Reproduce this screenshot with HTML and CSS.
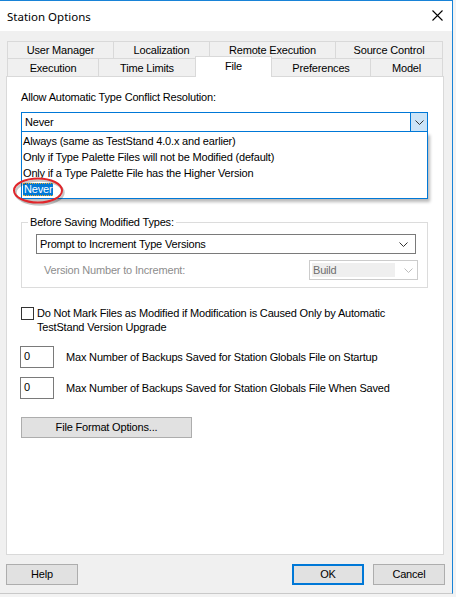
FILE: index.html
```html
<!DOCTYPE html>
<html>
<head>
<meta charset="utf-8">
<link rel="stylesheet" href="styles.css">
</head>
<body>
<div class="window">
  <div class="titlebar">
    <span class="title">Station Options</span>
    <svg class="close" width="11" height="11" viewBox="0 0 11 11"><path d="M0.5 0.5 L10.5 10.5 M10.5 0.5 L0.5 10.5" stroke="#000" stroke-width="1.1" fill="none"/></svg>
  </div>
  <div class="client">
    <div class="tabs">
      <div class="tabrow row1">
        <div class="tab w106">User Manager</div>
        <div class="tab w96">Localization</div>
        <div class="tab w126">Remote Execution</div>
        <div class="tab w108 last">Source Control</div>
      </div>
      <div class="tabrow row2">
        <div class="tab w91">Execution</div>
        <div class="tab w97">Time Limits</div>
        <div class="tab sel">File</div>
        <div class="tab w98">Preferences</div>
        <div class="tab w73 last">Model</div>
      </div>
    </div>
    <div class="panel">
      <div class="label-top">Allow Automatic Type Conflict Resolution:</div>
      <div class="combo-wrap">
        <div class="combo open">
          <span class="combo-text">Never</span>
          <span class="combo-btn"><svg width="9" height="5" viewBox="0 0 9 5"><path d="M0.5 0.5 L4.5 4.5 L8.5 0.5" stroke="#333" fill="none"/></svg></span>
        </div>
        <div class="dropdown">
          <div class="item">Always (same as TestStand 4.0.x and earlier)</div>
          <div class="item">Only if Type Palette Files will not be Modified (default)</div>
          <div class="item">Only if a Type Palette File has the Higher Version</div>
          <div class="item"><span class="hl">Never</span></div>
        </div>
        <svg class="circle" width="56" height="32" viewBox="0 0 56 32"><ellipse cx="27.5" cy="16.5" rx="24" ry="12" fill="none" stroke="rgba(0,0,0,0.22)" stroke-width="2.5"/><ellipse cx="26" cy="14.5" rx="24" ry="12" fill="none" stroke="#e0262b" stroke-width="2"/></svg>
      </div>

      <div class="group">
        <div class="legend">Before Saving Modified Types:</div>
        <div class="combo plain">
          <span class="combo-text">Prompt to Increment Type Versions</span>
          <svg class="chev" width="9" height="5" viewBox="0 0 9 5"><path d="M0.5 0.5 L4.5 4.5 L8.5 0.5" stroke="#333" fill="none"/></svg>
        </div>
        <div class="vrow">
          <span class="disabled-label">Version Number to Increment:</span>
          <div class="combo disabled">
            <span class="dis-field">Build</span>
            <svg class="chev" width="9" height="5" viewBox="0 0 9 5"><path d="M0.5 0.5 L4.5 4.5 L8.5 0.5" stroke="#bdbdbd" fill="none"/></svg>
          </div>
        </div>
      </div>

      <div class="check-row">
        <span class="checkbox"></span>
        <span class="check-text">Do Not Mark Files as Modified if Modification is Caused Only by Automatic<br>TestStand Version Upgrade</span>
      </div>

      <div class="num-row first">
        <span class="numbox">0</span>
        <span class="num-label">Max Number of Backups Saved for Station Globals File on Startup</span>
      </div>
      <div class="num-row">
        <span class="numbox">0</span>
        <span class="num-label">Max Number of Backups Saved for Station Globals File When Saved</span>
      </div>

      <div class="btn wide">File Format Options...</div>
    </div>
    <div class="footer">
      <div class="btn fbtn">Help</div>
      <div class="spacer"></div>
      <div class="btn fbtn default">OK</div>
      <div class="btn fbtn">Cancel</div>
    </div>
  </div>
</div>
</body>
</html>
```

FILE: styles.css
```css
* { box-sizing: border-box; }
html, body { margin: 0; padding: 0; }
body {
  width: 456px;
  height: 597px;
  background: #f3f3f3;
  font-family: "Liberation Sans", Arial, sans-serif;
  font-size: 11px;
  letter-spacing: -0.18px;
  color: #000;
  overflow: hidden;
}
.window {
  width: 453px;
  height: 594px;
  border-top: 1px solid #1883d7;
  border-right: 1px solid #1883d7;
  border-bottom: 1px solid #c9c9c9;
  background: #f0f0f0;
  display: flex;
  flex-direction: column;
}
.titlebar {
  height: 30px;
  background: #fff;
  display: flex;
  align-items: center;
  padding: 0 0 0 7px;
}
.title {
  font-family: "Noto Sans", "Liberation Sans", sans-serif;
  font-size: 11.5px;
  letter-spacing: 0;
  color: #000;
  flex: 1;
  padding-top: 1px;
}
.close { margin-right: 9px; margin-top: -1px; }
.client {
  flex: 1;
  padding-top: 10px;
  display: flex;
  flex-direction: column;
}
.tabs { margin-left: 7px; width: 436px; }
.tabrow { display: flex; }
.row1 { height: 17px; }
.row2 { height: 18px; }
.tab {
  border-top: 1px solid #d9d9d9;
  border-left: 1px solid #d9d9d9;
  background: #f0f0f0;
  text-align: center;
  line-height: 16px;
  white-space: nowrap;
}
.tab.last { border-right: 1px solid #d9d9d9; }
.row2 .tab { line-height: 18px; }
.w106 { width: 106px; }
.w96 { width: 96px; }
.w126 { width: 126px; }
.w108 { width: 108px; }
.w91 { width: 91px; }
.w97 { width: 97px; }
.w98 { width: 98px; }
.w73 { width: 73px; }
.tab.sel {
  width: 77px;
  height: 21px;
  margin-top: -2px;
  background: #fff;
  border-right: 1px solid #d9d9d9;
  line-height: 18px;
  z-index: 2;
}
.tab.sel + .tab { border-left: none; }
.panel {
  margin-left: 6px;
  width: 438px;
  height: 479px;
  background: #fff;
  border: 1px solid #d9d9d9;
  padding: 0 14px;
}
.label-top { margin-top: 14px; line-height: 13px; }
.combo-wrap { position: relative; margin-top: 8px; width: 407px; }
.combo {
  height: 20px;
  display: flex;
  align-items: center;
  background: #fff;
}
.combo.open { border: 1px solid #0078d7; }
.combo-text { flex: 1; padding-left: 3px; white-space: nowrap; }
.combo-btn {
  width: 17px;
  height: 18px;
  background: #cce4f7;
  border-left: 1px solid #0078d7;
  display: flex;
  align-items: center;
  justify-content: center;
}
.dropdown {
  position: absolute;
  left: 0;
  top: 20px;
  width: 407px;
  height: 67px;
  background: #fff;
  border: 1px solid #0078d7;
  border-top: none;
  box-shadow: 2px 3px 3px rgba(0,0,0,0.28);
  padding-top: 1px;
  z-index: 3;
}
.item { height: 16px; line-height: 16px; padding-left: 1px; white-space: nowrap; }
.hl {
  display: inline-block;
  background: #0078d7;
  color: #fff;
  line-height: 11px;
  padding: 0 1px;
  border-top: 1px dotted #e8b030;
  border-bottom: 1px dotted #e8b030;
  vertical-align: middle;
  margin-top: -2px;
}
.circle { position: absolute; left: -9px; top: 64px; z-index: 4; }
.group {
  margin-top: 90px;
  width: 407px;
  height: 66px;
  border: 1px solid #dcdcdc;
  padding: 0 9px 0 14px;
}
.legend {
  width: fit-content;
  margin-top: -7px;
  margin-left: -8px;
  padding: 0 2px;
  line-height: 13px;
  background: #fff;
}
.combo.plain {
  margin-top: 5px;
  width: 380px;
  border: 1px solid #7a7a7a;
}
.chev { margin-right: 7px; }
.vrow {
  margin-top: 6px;
  display: flex;
  justify-content: space-between;
  align-items: center;
}
.disabled-label { color: #8d8d8d; padding-left: 8px; }
.combo.disabled {
  width: 109px;
  border: 1px solid #cccccc;
  padding-left: 2px;
}
.dis-field {
  flex: 1;
  height: 14px;
  line-height: 14px;
  background: #efefef;
  color: #6d6d6d;
  padding-left: 1px;
  margin-right: 9px;
}
.combo.disabled .chev { margin-right: 4px; }
.check-row {
  margin-top: 18px;
  display: flex;
  align-items: flex-start;
}
.checkbox {
  width: 13px;
  height: 13px;
  border: 1px solid #333;
  margin-top: 1px;
  flex: none;
}
.check-text { margin-left: 3px; line-height: 14px; }
.num-row {
  display: flex;
  align-items: center;
  margin-top: 9px;
}
.num-row.first { margin-top: 12px; }
.numbox {
  width: 34px;
  height: 22px;
  margin-left: -1px;
  border: 1px solid #7a7a7a;
  padding: 2px 0 0 3px;
  line-height: 14px;
  align-self: flex-start;
}
.num-label { margin-left: 12px; }
.btn {
  background: #e1e1e1;
  border: 1px solid #adadad;
  height: 21px;
  text-align: center;
  line-height: 19px;
}
.btn.wide { margin-top: 18px; width: 171px; }
.footer {
  display: flex;
  margin-top: 9px;
  padding: 0 7px 0 6px;
  gap: 9px;
}
.spacer { flex: 1; }
.fbtn { width: 72px; }
.fbtn.default { border: 2px solid #0078d7; line-height: 17px; }
```
